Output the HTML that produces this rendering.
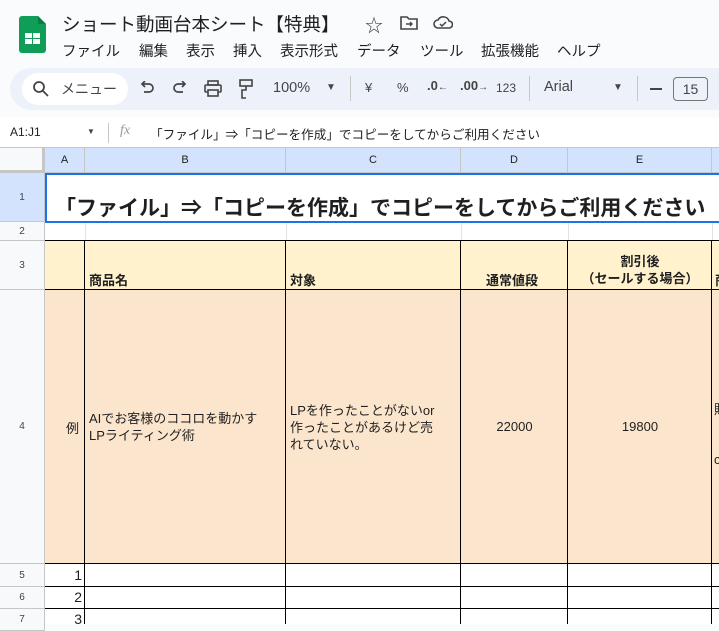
<!DOCTYPE html>
<html><head><meta charset="utf-8"><style>
*{margin:0;padding:0;box-sizing:border-box}
body{width:719px;height:624px;overflow:hidden;background:#f9fbfd;font-family:"Liberation Sans","Noto Sans CJK JP",sans-serif;position:relative;color:#1f1f1f}
.a{position:absolute;white-space:nowrap}
.m{position:absolute;top:40px;font-size:14.5px;white-space:nowrap}
.hd{position:absolute;background:#d3e3fd;font-size:11px;color:#1f1f1f;display:flex;align-items:center;justify-content:center;border-right:1px solid #c4c7c5;border-bottom:1px solid #c4c7c5}
.rh{position:absolute;left:0;width:45px;background:#f8f9fa;font-size:10px;color:#444;display:flex;align-items:center;justify-content:center;border-bottom:1px solid #c4c7c5;border-right:1px solid #c4c7c5}
.c{position:absolute;font-size:13px}
</style></head><body>
<svg class="a" style="left:19px;top:16px" width="27" height="37" viewBox="0 0 27 37"><path d="M3 0h16l8 8v26a3 3 0 0 1-3 3H3a3 3 0 0 1-3-3V3a3 3 0 0 1 3-3z" fill="#0f9d58"/><path d="M19 0l8 8h-8z" fill="#0b7d43"/><rect x="6" y="17" width="15" height="11" fill="#fff"/><rect x="6" y="22" width="15" height="1" fill="#0f9d58"/><rect x="13" y="17" width="1" height="11" fill="#0f9d58"/></svg>
<div class="a" style="left:62px;top:11px;font-size:18.5px;color:#1f1f1f">ショート動画台本シート【特典】</div>
<div class="a" style="left:365px;top:12px;font-size:18px;color:#444">☆</div>
<svg class="a" style="left:400px;top:15px" width="18" height="15" viewBox="0 0 18 15"><path d="M1 2h6l2 2h8v10H1z" fill="none" stroke="#444" stroke-width="1.6"/><path d="M6 9h6M10 7l2 2-2 2" fill="none" stroke="#444" stroke-width="1.4"/></svg>
<svg class="a" style="left:433px;top:15px" width="20" height="15" viewBox="0 0 20 15"><path d="M5 13a4 4 0 0 1 0-8 6 6 0 0 1 11 1 3.5 3.5 0 0 1 0 7z" fill="none" stroke="#444" stroke-width="1.6"/><path d="M7 9l2 2 4-4" fill="none" stroke="#444" stroke-width="1.5"/></svg>
<div class="m" style="left:62px">ファイル</div>
<div class="m" style="left:139px">編集</div>
<div class="m" style="left:186px">表示</div>
<div class="m" style="left:233px">挿入</div>
<div class="m" style="left:280px">表示形式</div>
<div class="m" style="left:357px">データ</div>
<div class="m" style="left:420px">ツール</div>
<div class="m" style="left:481px">拡張機能</div>
<div class="m" style="left:557px">ヘルプ</div>
<div class="a" style="left:10px;top:68px;width:730px;height:42px;background:#edf2fa;border-radius:21px"></div>
<div class="a" style="left:22px;top:73px;width:106px;height:32px;background:#fff;border-radius:16px"></div>
<svg class="a" style="left:32px;top:80px" width="18" height="18" viewBox="0 0 18 18"><circle cx="7" cy="7" r="5" fill="none" stroke="#444" stroke-width="1.8"/><path d="M11 11l5 5" stroke="#444" stroke-width="1.8"/></svg>
<div class="a" style="left:61px;top:79px;font-size:14px;color:#444">メニュー</div>
<svg class="a" style="left:139px;top:81px" width="16" height="14" viewBox="0 0 16 14"><path d="M4 3H10a4 4 0 0 1 0 8H5" fill="none" stroke="#444" stroke-width="1.7"/><path d="M6 0L3 3l3 3" fill="none" stroke="#444" stroke-width="1.7"/></svg>
<svg class="a" style="left:172px;top:81px" width="16" height="14" viewBox="0 0 16 14"><path d="M12 3H6a4 4 0 0 0 0 8h5" fill="none" stroke="#444" stroke-width="1.7"/><path d="M10 0l3 3-3 3" fill="none" stroke="#444" stroke-width="1.7"/></svg>
<svg class="a" style="left:204px;top:80px" width="18" height="17" viewBox="0 0 18 17"><rect x="4" y="1" width="10" height="4" fill="none" stroke="#444" stroke-width="1.6"/><rect x="1" y="5" width="16" height="7" rx="1" fill="none" stroke="#444" stroke-width="1.6"/><rect x="4" y="10" width="10" height="6" fill="#edf2fa" stroke="#444" stroke-width="1.6"/></svg>
<svg class="a" style="left:239px;top:79px" width="14" height="20" viewBox="0 0 14 20"><rect x="1" y="1" width="12" height="6" fill="none" stroke="#444" stroke-width="1.6"/><path d="M7 7v4H3v8h4" fill="none" stroke="#444" stroke-width="1.6"/></svg>
<div class="a" style="left:273px;top:80px;font-size:14.5px;color:#444">100%</div>
<div class="a" style="left:326px;top:82px;font-size:10px;color:#444">▼</div>
<div class="a" style="left:350px;top:76px;width:1px;height:25px;background:#c7c7c7"></div>
<div class="a" style="left:365px;top:80px;font-size:13px;color:#444">¥</div>
<div class="a" style="left:397px;top:80px;font-size:13px;color:#444">%</div>
<div class="a" style="left:427px;top:78px;font-size:13px;color:#444;font-weight:bold">.0<span style="font-size:10px">←</span></div>
<div class="a" style="left:460px;top:78px;font-size:13px;color:#444;font-weight:bold">.00<span style="font-size:10px">→</span></div>
<div class="a" style="left:496px;top:81px;font-size:12px;color:#444">123</div>
<div class="a" style="left:529px;top:76px;width:1px;height:25px;background:#c7c7c7"></div>
<div class="a" style="left:544px;top:79px;font-size:14.5px;color:#444">Arial</div>
<div class="a" style="left:613px;top:82px;font-size:10px;color:#444">▼</div>
<div class="a" style="left:637px;top:76px;width:1px;height:25px;background:#c7c7c7"></div>
<div class="a" style="left:650px;top:88px;width:12px;height:2px;background:#444"></div>
<div class="a" style="left:673px;top:77px;width:35px;height:24px;border:1px solid #747775;border-radius:4px;font-size:14px;color:#444;text-align:center;line-height:22px">15</div>
<div class="a" style="left:0;top:117px;width:719px;height:31px;background:#fff;border-bottom:1px solid #c4c7c5"></div>
<div class="a" style="left:10px;top:125px;font-size:12px">A1:J1</div>
<div class="a" style="left:87px;top:127px;font-size:8px;color:#444">▼</div>
<div class="a" style="left:108px;top:123px;width:1px;height:20px;background:#c7c7c7"></div>
<div class="a" style="left:120px;top:123px;font-size:14px;color:#999;font-style:italic;font-family:'Liberation Serif',serif">fx</div>
<div class="a" style="left:150px;top:124px;font-size:12.6px">「ファイル」⇒「コピーを作成」でコピーをしてからご利用ください</div>
<div class="a" style="left:0;top:148px;width:719px;height:476px;background:#fff"></div>
<div class="a" style="left:0;top:148px;width:45px;height:25px;background:#f8f9fa;border-right:3px solid #c4c7c5;border-bottom:3px solid #c4c7c5"></div>
<div class="hd" style="left:45px;top:148px;width:40px;height:25px">A</div>
<div class="hd" style="left:85px;top:148px;width:201px;height:25px">B</div>
<div class="hd" style="left:286px;top:148px;width:175px;height:25px">C</div>
<div class="hd" style="left:461px;top:148px;width:107px;height:25px">D</div>
<div class="hd" style="left:568px;top:148px;width:144px;height:25px">E</div>
<div class="hd" style="left:712px;top:148px;width:20px;height:25px"></div>
<div class="rh" style="top:173px;height:49px;background:#d3e3fd">1</div>
<div class="rh" style="top:222px;height:19px">2</div>
<div class="rh" style="top:241px;height:49px">3</div>
<div class="rh" style="top:290px;height:274px">4</div>
<div class="rh" style="top:564px;height:23px">5</div>
<div class="rh" style="top:587px;height:22px">6</div>
<div class="rh" style="top:609px;height:22px">7</div>
<div class="a" style="left:45px;top:222px;width:674px;height:19px;border-bottom:1px solid #e2e2e2"></div>
<div class="a" style="left:85px;top:222px;width:1px;height:19px;background:#e2e2e2"></div>
<div class="a" style="left:286px;top:222px;width:1px;height:19px;background:#e2e2e2"></div>
<div class="a" style="left:461px;top:222px;width:1px;height:19px;background:#e2e2e2"></div>
<div class="a" style="left:568px;top:222px;width:1px;height:19px;background:#e2e2e2"></div>
<div class="a" style="left:712px;top:222px;width:1px;height:19px;background:#e2e2e2"></div>
<div class="a" style="left:45px;top:173px;width:680px;height:50px;border:2px solid #1a73e8"></div>
<div class="a" style="left:55px;top:192px;font-size:21px;font-weight:bold">「ファイル」⇒「コピーを作成」でコピーをしてからご利用ください</div>
<div class="a" style="left:45px;top:240px;width:680px;height:50px;background:#fff2cc;border-top:1px solid #000;border-bottom:1px solid #000"></div>
<div class="a" style="left:45px;top:290px;width:680px;height:274px;background:#fce5cd;border-bottom:1px solid #000"></div>
<div class="a" style="left:45px;top:586px;width:680px;height:1px;background:#000"></div>
<div class="a" style="left:45px;top:608px;width:680px;height:1px;background:#000"></div>
<div class="a" style="left:84px;top:240px;width:1px;height:384px;background:#000"></div>
<div class="a" style="left:285px;top:240px;width:1px;height:384px;background:#000"></div>
<div class="a" style="left:460px;top:240px;width:1px;height:384px;background:#000"></div>
<div class="a" style="left:567px;top:240px;width:1px;height:384px;background:#000"></div>
<div class="a" style="left:711px;top:240px;width:1px;height:384px;background:#000"></div>
<div class="c" style="left:89px;top:270px;font-weight:bold">商品名</div>
<div class="c" style="left:290px;top:270px;font-weight:bold">対象</div>
<div class="c" style="left:486px;top:270px;font-weight:bold">通常値段</div>
<div class="c" style="left:568px;top:253px;width:144px;text-align:center;font-weight:bold;line-height:17px">割引後<br>（セールする場合）</div>
<div class="c" style="left:715px;top:270px;font-weight:bold">商</div>
<div class="c" style="left:66px;top:418px">例</div>
<div class="c" style="left:89px;top:410px;line-height:17px">AIでお客様のココロを動かす<br>LPライティング術</div>
<div class="c" style="left:290px;top:402px;line-height:17px">LPを作ったことがないor<br>作ったことがあるけど売<br>れていない。</div>
<div class="c" style="left:461px;top:419px;width:107px;text-align:center">22000</div>
<div class="c" style="left:568px;top:419px;width:144px;text-align:center">19800</div>
<div class="c" style="left:714px;top:397px;line-height:25px">販<br>・<br>c</div>
<div class="c" style="left:60px;top:567px;width:22px;text-align:right;font-size:14px">1</div>
<div class="c" style="left:60px;top:589px;width:22px;text-align:right;font-size:14px">2</div>
<div class="c" style="left:60px;top:611px;width:22px;text-align:right;font-size:14px">3</div>
</body></html>
